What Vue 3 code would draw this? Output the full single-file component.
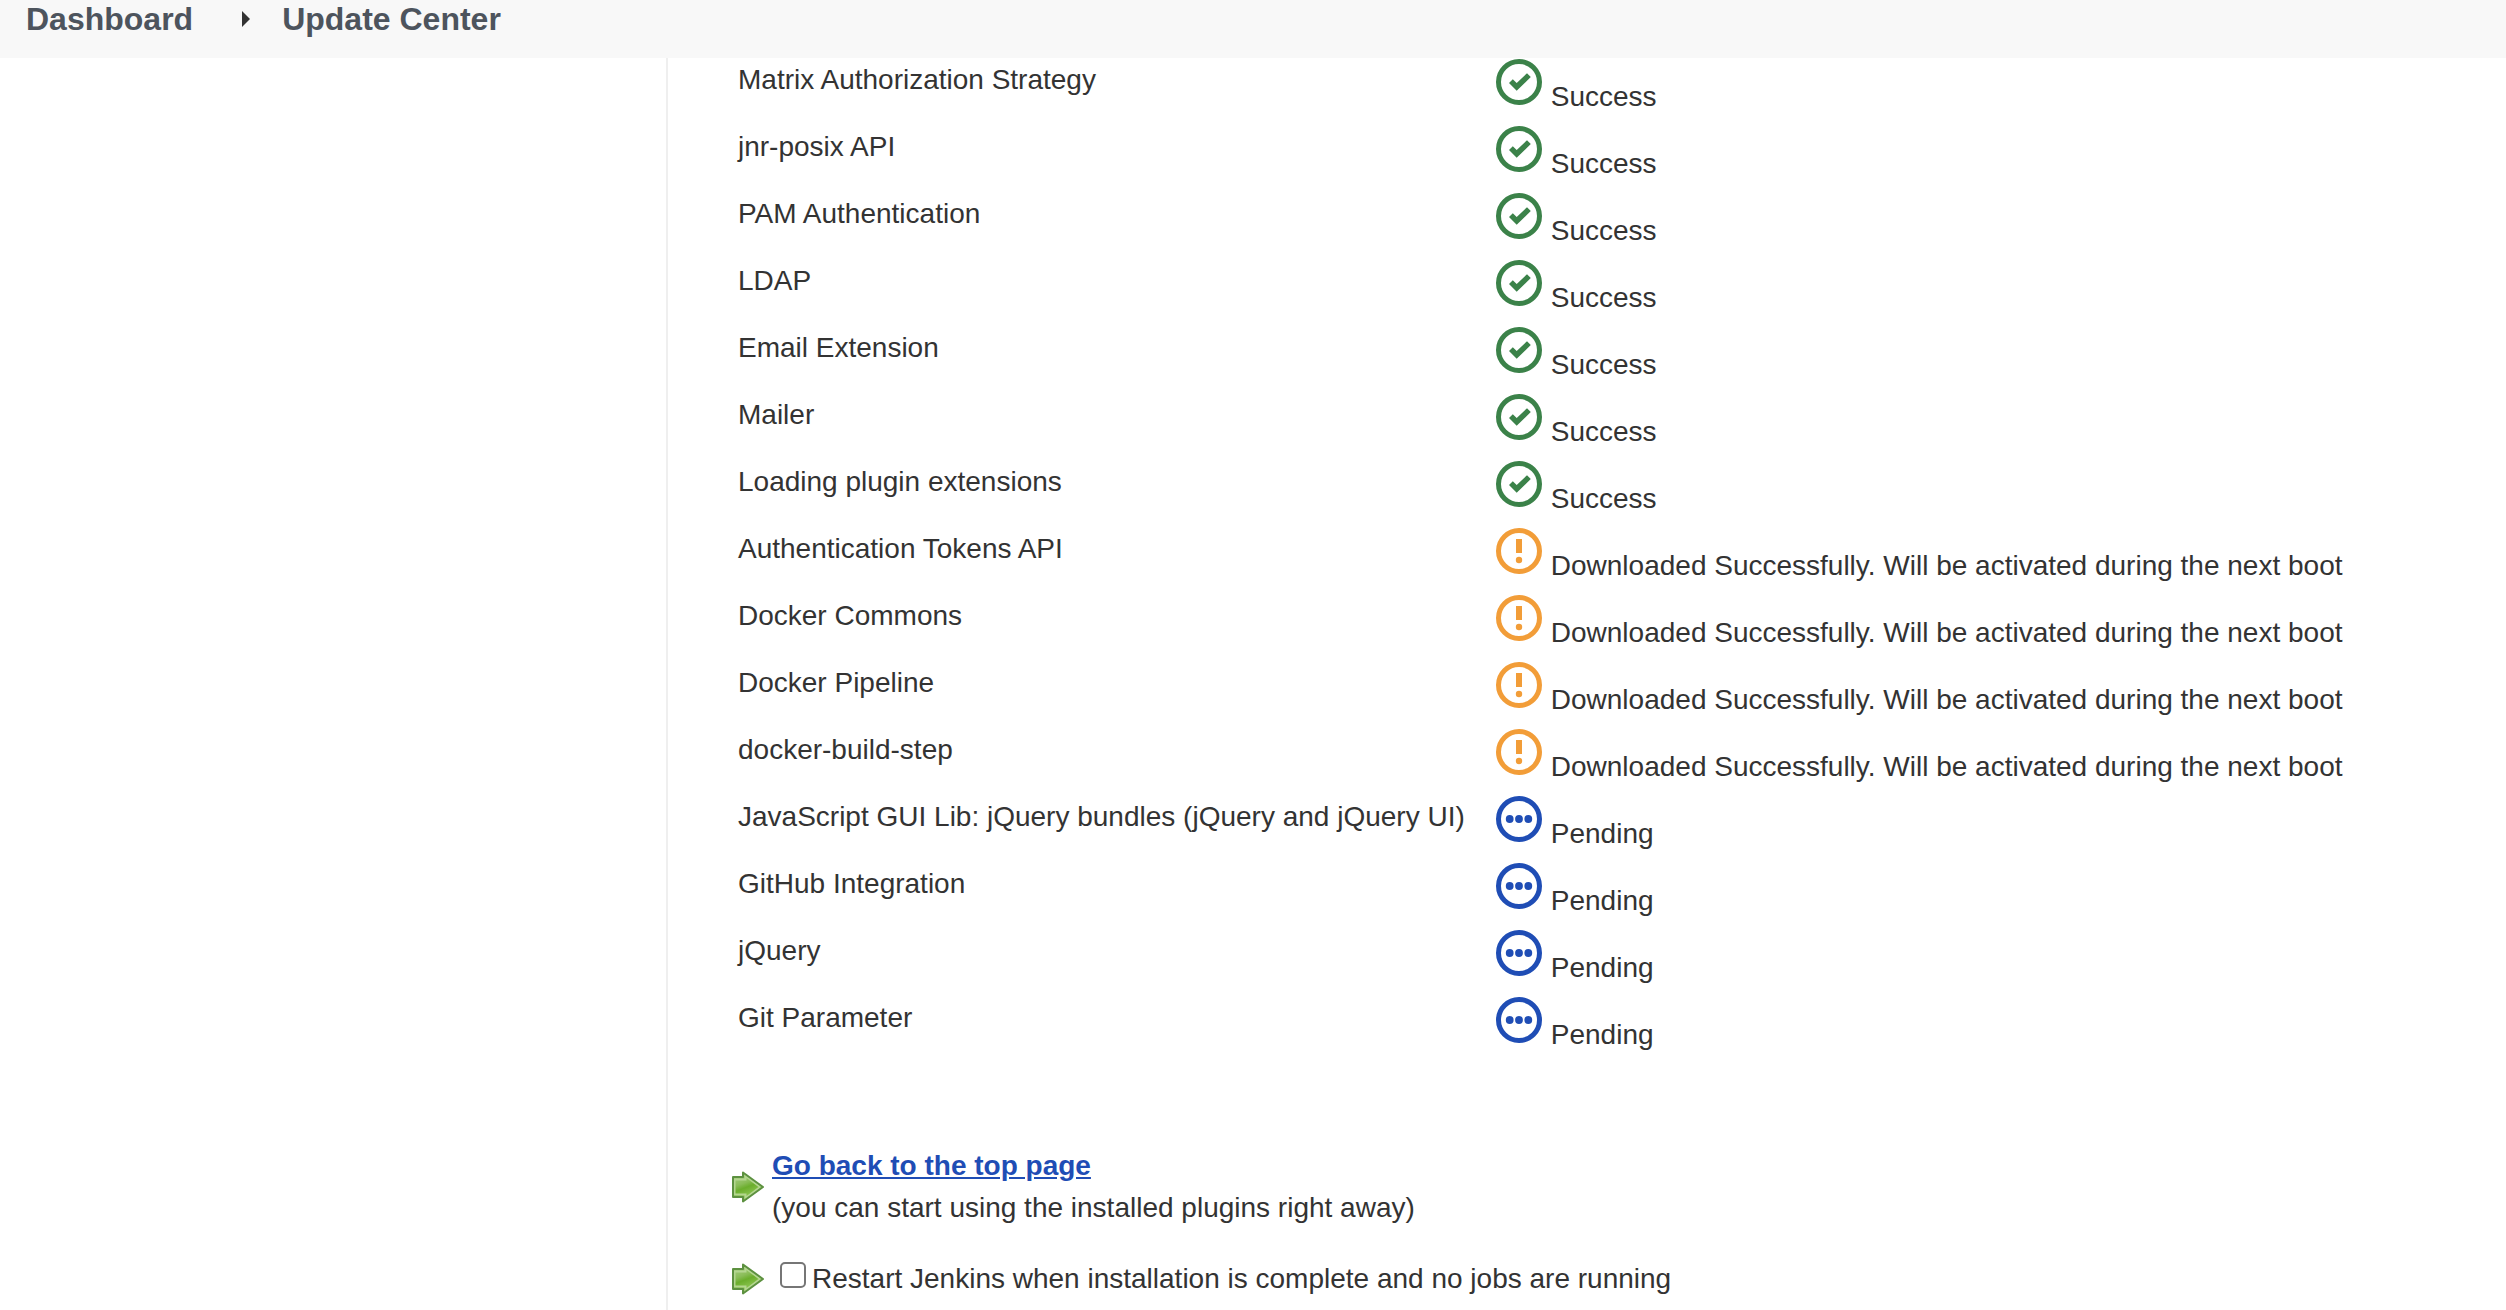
<script setup>
const plugins = [
  ['Matrix Authorization Strategy', 'success'],
  ['jnr-posix API', 'success'],
  ['PAM Authentication', 'success'],
  ['LDAP', 'success'],
  ['Email Extension', 'success'],
  ['Mailer', 'success'],
  ['Loading plugin extensions', 'success'],
  ['Authentication Tokens API', 'downloaded'],
  ['Docker Commons', 'downloaded'],
  ['Docker Pipeline', 'downloaded'],
  ['docker-build-step', 'downloaded'],
  ['JavaScript GUI Lib: jQuery bundles (jQuery and jQuery UI)', 'pending'],
  ['GitHub Integration', 'pending'],
  ['jQuery', 'pending'],
  ['Git Parameter', 'pending'],
].map(([name, status]) => ({ name, status }))

const labels = {
  success: 'Success',
  downloaded: 'Downloaded Successfully. Will be activated during the next boot',
  pending: 'Pending',
}
</script>

<template>
  <div class="page">
    <svg class="defs" aria-hidden="true">
      <defs>
        <linearGradient id="arrow-fill" x1="0" y1="0" x2="0.4" y2="1">
          <stop offset="0" stop-color="#b5d596" />
          <stop offset="0.45" stop-color="#8abd58" />
          <stop offset="0.6" stop-color="#6bae2c" />
          <stop offset="1" stop-color="#9bcf62" />
        </linearGradient>
        <symbol id="arrow" viewBox="0 0 32 32">
          <path d="M0 6H11V1L31 16L11 31V26H0Z" fill="url(#arrow-fill)" />
          <path d="M2.5 23.5V8.5H13.5V5L28 16L13.5 27V23.5Z" fill="none" stroke="#b4d690" stroke-width="2" />
          <path d="M1 6H11V1.5L31 16L11 30.5V26H1Z" fill="none" stroke="#5d9140" stroke-width="2" stroke-linejoin="round" />
        </symbol>
      </defs>
    </svg>

    <nav class="breadcrumbs" aria-label="Breadcrumb">
      <a href="#">Dashboard</a>
      <svg class="separator" viewBox="0 0 8 16" aria-hidden="true"><path d="M0 0L8 8L0 16Z" /></svg>
      <a href="#">Update Center</a>
    </nav>

    <div class="body">
      <aside class="side"></aside>
      <main class="main">
        <table class="plugins">
          <tbody>
            <tr v-for="plugin in plugins" :key="plugin.name">
              <td class="name">{{ plugin.name }}</td>
              <td>
                <svg class="icon" :class="plugin.status" viewBox="0 0 48 48" aria-hidden="true">
                  <circle class="ring" cx="24" cy="24" r="20.5" />
                  <path v-if="plugin.status === 'success'" d="M14 25L17.8 21.3L21.7 25L32 15.2L35.8 19L21.7 32.8Z" />
                  <template v-else-if="plugin.status === 'downloaded'">
                    <rect x="21" y="12" width="6" height="14" />
                    <circle cx="24" cy="33" r="3.2" />
                  </template>
                  <template v-else>
                    <circle cx="14.7" cy="24" r="3.9" />
                    <circle cx="24" cy="24" r="3.9" />
                    <circle cx="33.3" cy="24" r="3.9" />
                  </template>
                </svg>
                {{ labels[plugin.status] }}
              </td>
            </tr>
          </tbody>
        </table>

        <div class="actions">
          <div class="action">
            <svg class="arrow" aria-hidden="true"><use href="#arrow" /></svg>
            <div>
              <a class="top-link" href="#">Go back to the top page</a>
              <div>(you can start using the installed plugins right away)</div>
            </div>
          </div>
          <div class="action">
            <svg class="arrow" aria-hidden="true"><use href="#arrow" /></svg>
            <div class="restart">
              <input id="restart" type="checkbox" />
              <label for="restart">Restart Jenkins when installation is complete and no jobs are running</label>
            </div>
          </div>
        </div>
      </main>
    </div>
  </div>
</template>

<style>
body {
  margin: 0;
  background: #fff;
}
</style>

<style scoped>
.page {
  display: flex;
  flex-direction: column;
  min-height: 100vh;
  color: #333;
  font: 28px/42px "Liberation Sans", Arial, sans-serif;
}
.defs {
  position: absolute;
  width: 0;
  height: 0;
}
.breadcrumbs {
  position: sticky;
  top: 0;
  z-index: 1;
  display: flex;
  align-items: center;
  box-sizing: border-box;
  height: 58px;
  padding: 0 26px 20px;
  background: #f8f8f8;
  font-size: 32px;
  font-weight: bold;
}
.breadcrumbs a {
  color: #4d545d;
  text-decoration: none;
}
.separator {
  width: 8px;
  height: 16px;
  margin: 0 32px 0 49px;
  fill: #333;
}
.body {
  display: flex;
  flex: 1;
  margin-top: -4px;
}
.side {
  flex: none;
  width: 666px;
}
.main {
  flex: 1;
  padding: 0 64px 9px;
  border-left: 2px solid #efefef;
}
.plugins {
  border-collapse: collapse;
}
.plugins tr {
  height: 67px;
}
.plugins td {
  padding: 4px 4px 3px;
  vertical-align: top;
  white-space: nowrap;
}
.plugins .name {
  width: 749px;
  padding: 5px 4px 3px 6px;
}
.icon {
  width: 48px;
  height: 48px;
  fill: currentColor;
}
.icon .ring {
  fill: none;
  stroke: currentColor;
  stroke-width: 5;
}
.success {
  color: #3b8249;
}
.downloaded {
  color: #f29d38;
}
.pending {
  color: #1f4db5;
}
.actions {
  display: flex;
  flex-direction: column;
  gap: 29px;
  margin-top: 86px;
}
.action {
  display: flex;
  align-items: center;
  gap: 8px;
}
.arrow {
  flex: none;
  width: 32px;
  height: 32px;
}
.top-link {
  color: #1f4db5;
  font-weight: bold;
}
.restart {
  display: flex;
  align-items: baseline;
  gap: 6px;
  padding-left: 8px;
}
.restart input {
  appearance: none;
  box-sizing: border-box;
  width: 26px;
  height: 26px;
  margin: 0;
  border: 2px solid #767676;
  border-radius: 5px;
  background: #fff;
}
</style>
